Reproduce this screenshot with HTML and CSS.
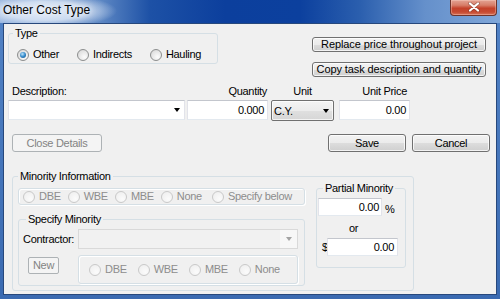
FILE: index.html
```html
<!DOCTYPE html>
<html lang="en">
<head>
  <meta charset="UTF-8">
  <title>Other Cost Type</title>
  <link rel="stylesheet" href="styles.css">
</head>
<body>
  <div class="window">
    <div class="titlebar">
      <span class="title">Other Cost Type</span>
      <button class="close-btn" aria-label="Close">
        <svg width="12" height="10" viewBox="0 0 12 10">
          <path d="M2 1.5 L10 8.5 M10 1.5 L2 8.5" stroke="#5a2a22" stroke-width="3.6" stroke-opacity="0.45" stroke-linecap="round"/>
          <path d="M2 1.5 L10 8.5 M10 1.5 L2 8.5" stroke="#fff" stroke-width="2.2" stroke-linecap="round"/>
        </svg>
      </button>
    </div>

    <div class="client">
      <!-- тип и кнопки справа -->
      <div class="row-top">
        <fieldset class="group type-group">
          <legend>Type</legend>
          <div class="radio-row type-radios">
            <span class="radio checked"><span class="dot"></span>Other</span>
            <span class="radio"><span class="dot"></span>Indirects</span>
            <span class="radio"><span class="dot"></span>Hauling</span>
          </div>
        </fieldset>
        <div class="side-buttons">
          <button class="btn wide">Replace price throughout project</button>
          <button class="btn wide">Copy task description and quantity</button>
        </div>
      </div>

      <!-- описание, количество, единица, цена -->
      <div class="row-fields">
        <div class="col col-desc">
          <span class="lbl">Description:</span>
          <div class="field combo-edit"><span class="val"></span><span class="arrow"></span></div>
        </div>
        <div class="col col-qty">
          <span class="lbl right">Quantity</span>
          <div class="field num">0.000</div>
        </div>
        <div class="col col-unit">
          <span class="lbl center">Unit</span>
          <div class="combo-list"><span class="val">C.Y.</span><span class="arrow"></span></div>
        </div>
        <div class="col col-price">
          <span class="lbl right">Unit Price</span>
          <div class="field num">0.00</div>
        </div>
      </div>

      <div class="row-actions">
        <button class="btn act disabled close-details">Close Details</button>
        <button class="btn act save">Save</button>
        <button class="btn act cancel">Cancel</button>
      </div>

      <!-- меньшинства -->
      <fieldset class="group minority">
        <legend>Minority Information</legend>
        <div class="minority-body">
          <div class="minority-left">
            <div class="panel radio-row top-radios">
              <span class="radio disabled"><span class="dot"></span>DBE</span>
              <span class="radio disabled"><span class="dot"></span>WBE</span>
              <span class="radio disabled"><span class="dot"></span>MBE</span>
              <span class="radio disabled"><span class="dot"></span>None</span>
              <span class="radio disabled wide-gap"><span class="dot"></span>Specify below</span>
            </div>
            <fieldset class="group specify">
              <legend>Specify Minority</legend>
              <div class="contractor-row">
                <span class="cell">Contractor:</span>
                <div class="combo-disabled"><span class="val"></span><span class="arrow"></span></div>
              </div>
              <div class="new-row">
                <span class="cell"><button class="btn disabled new-btn">New</button></span>
                <div class="panel radio-row bottom-radios">
                  <span class="radio disabled"><span class="dot"></span>DBE</span>
                  <span class="radio disabled"><span class="dot"></span>WBE</span>
                  <span class="radio disabled"><span class="dot"></span>MBE</span>
                  <span class="radio disabled"><span class="dot"></span>None</span>
                </div>
              </div>
            </fieldset>
          </div>
          <fieldset class="group partial">
            <legend>Partial Minority</legend>
            <div class="pct-row">
              <div class="field num small">0.00</div>
              <span class="unit-sign">%</span>
            </div>
            <div class="or">or</div>
            <div class="usd-row">
              <span class="dollar">$</span>
              <div class="field num usd">0.00</div>
            </div>
          </fieldset>
        </div>
      </fieldset>
    </div>
  </div>
</body>
</html>
```

FILE: styles.css
```css
body {
  margin: 0;
  background: #fff;
  font-family: "Liberation Sans", Arial, sans-serif;
  font-size: 11px;
  letter-spacing: -0.3px;
  color: #000;
}
/* Окно */
.window {
  width: 500px;
  height: 299px;
  background: linear-gradient(#5283c6, #3a6ab1);
  display: flex;
  flex-direction: column;
  overflow: hidden;
}
.titlebar {
  height: 23px;
  flex: none;
  display: flex;
  align-items: flex-start;
  background:
    radial-gradient(ellipse 72px 17px at 45px 11px, rgba(226,235,248,1) 0%, rgba(220,231,246,0.85) 55%, rgba(220,231,246,0) 100%),
    linear-gradient(90deg, #8eaedb 0, #5e88c4 20%, #1d51a6 30%, #0c3f9d 45%, #0c409e 60%, #2b5fae 72%, #6590cb 85%, #80a7d9 100%);
}
.title {
  font-size: 12px;
  letter-spacing: 0;
  line-height: 20px;
  padding-left: 3px;
  text-shadow: 0 0 6px rgba(255,255,255,0.9), 0 0 10px rgba(255,255,255,0.6);
}
.close-btn {
  margin-left: auto;
  margin-right: 3px;
  width: 47px;
  height: 16px;
  padding: 0 0 2px 0;
  border: 1px solid #6e342b;
  border-top: none;
  border-radius: 0 0 4px 4px;
  background: linear-gradient(#e3a394 0, #d77d68 35%, #c4412a 55%, #c64a31 80%, #d7735a 100%);
  box-shadow: inset 0 0 0 1px rgba(255,220,210,0.35);
  display: flex;
  align-items: center;
  justify-content: center;
}
.client {
  margin: 0 3px;
  height: 272px;
  box-sizing: border-box;
  border: 1px solid #27487c;
  background: #f0f0f0;
  padding-top: 3px;
}
/* Группы */
.group {
  margin: 0;
  min-inline-size: 0;
  border: 1px solid #d5dfe5;
  border-radius: 3px;
  padding: 0;
}
.group legend {
  padding: 0 2px;
  line-height: 13px;
}
.panel {
  border: 1px solid #d5dfe5;
  border-radius: 3px;
  box-shadow: inset 1px 1px 0 #fff, 1px 1px 0 #fff;
  box-sizing: border-box;
}
/* Радиокнопки */
.radio-row {
  display: flex;
  align-items: center;
}
.radio {
  display: flex;
  align-items: center;
  gap: 4px;
  line-height: 13px;
}
.dot {
  width: 12px;
  height: 12px;
  box-sizing: border-box;
  border: 1px solid #8c8e8e;
  border-radius: 50%;
  background: radial-gradient(circle at 65% 70%, #fcfcfc 0, #e2e2e2 65%, #cdcdcd 100%);
  display: flex;
  align-items: center;
  justify-content: center;
}
.radio.checked .dot::after {
  content: "";
  width: 6px;
  height: 6px;
  border-radius: 50%;
  background: radial-gradient(circle at 40% 35%, #bde4fa 0, #3289cb 50%, #1a4b78 100%);
}
.radio.disabled {
  color: #8d8d8d;
}
.radio.disabled .dot {
  border-color: #c9c9c9;
  background: radial-gradient(circle at 65% 70%, #fbfbfb 0, #f1f1f1 70%, #e8e8e8 100%);
}
/* Кнопки */
.btn {
  font: inherit;
  letter-spacing: inherit;
  color: #000;
  padding: 0;
  box-sizing: border-box;
  border: 1px solid #707070;
  border-radius: 3px;
  background: linear-gradient(#f2f2f2 0, #ebebeb 50%, #dddddd 50%, #cfcfcf 100%);
  box-shadow: inset 0 0 0 1px rgba(255,255,255,0.75);
  overflow: hidden;
}
.btn.disabled {
  border-color: #adb2b5;
  background: #f4f4f4;
  color: #838383;
  box-shadow: none;
}
/* Верхний ряд */
.row-top {
  display: flex;
  align-items: flex-start;
  padding-left: 4px;
  height: 50px;
}
.type-group {
  width: 210px;
  height: 37px;
  box-sizing: border-box;
  padding-left: 4px;
}
.type-radios {
  margin: 8px 0 0 4px;
  gap: 18px;
}
.side-buttons {
  margin: 10px 10px 0 auto;
  display: flex;
  flex-direction: column;
  gap: 10px;
}
.btn.wide {
  width: 174px;
  height: 15px;
  line-height: 13px;
  letter-spacing: -0.1px;
}
/* Поля */
.row-fields {
  display: flex;
  padding-left: 4px;
  margin-top: 8px;
}
.col {
  display: flex;
  flex-direction: column;
}
.lbl {
  line-height: 13px;
  margin-bottom: 2px;
}
.lbl.right { text-align: right; padding-right: 1px; }
.lbl.center { text-align: center; }
.col-desc { width: 177px; }
.col-desc .lbl { padding-left: 4px; }
.col-qty { width: 81px; margin-left: 2px; }
.col-unit { width: 63px; margin-left: 3px; }
.col-price { width: 71px; margin-left: 5px; }
.col-price .lbl { padding-right: 3px; }
.field {
  height: 20px;
  box-sizing: border-box;
  background: #fff;
  border: 1px solid;
  border-color: #c3c6cd #e2e3ea #e3e9ef #e2e3ea;
  line-height: 18px;
}
.field.num {
  text-align: right;
  padding-right: 3px;
}
.arrow {
  width: 0;
  height: 0;
  border-left: 3px solid transparent;
  border-right: 3px solid transparent;
  border-top: 4px solid #000;
}
.combo-edit {
  display: flex;
  align-items: center;
  justify-content: flex-end;
  padding-right: 4px;
}
.combo-list {
  height: 21px;
  box-sizing: border-box;
  border: 1px solid #707070;
  border-radius: 2px;
  background: linear-gradient(#f4f4f4 0, #ececec 50%, #e0e0e0 50%, #d6d6d6 100%);
  box-shadow: inset 0 0 0 1px rgba(255,255,255,0.7);
  display: flex;
  align-items: center;
  justify-content: space-between;
  padding: 0 4px 0 2px;
}
.combo-list .arrow {
  border-left-width: 3.5px;
  border-right-width: 3.5px;
}
/* Ряд кнопок */
.row-actions {
  display: flex;
  margin-top: 13px;
  padding: 0 6px 0 8px;
}
.btn.act {
  height: 18px;
  line-height: 16px;
  width: 78px;
}
.btn.close-details { width: 90px; }
.btn.save { margin-left: auto; }
.btn.cancel { margin-left: 6px; }
/* Меньшинства */
.minority {
  margin: 18px 0 0 8px;
  width: 402px;
  box-sizing: border-box;
  padding: 0 7px 4px 5px;
}
.minority-body {
  display: flex;
  align-items: flex-start;
}
.minority-left {
  width: 287px;
  margin-top: 5px;
}
.top-radios {
  height: 17px;
  padding-left: 4px;
  gap: 7px;
}
.top-radios .wide-gap { margin-left: 3px; }
.specify {
  margin-top: 8px;
  padding: 3px 6px 1px 4px;
}
.specify legend { margin-left: 3px; }
.contractor-row,
.new-row {
  display: flex;
  align-items: flex-start;
}
.cell {
  width: 55px;
  flex: none;
  line-height: 20px;
}
.combo-disabled {
  flex: 1;
  height: 20px;
  box-sizing: border-box;
  border: 1px solid #d9d9d9;
  background: linear-gradient(90deg, #f1f1f1 0, #f1f1f1 92%, #f7f7f7 92%);
  display: flex;
  align-items: center;
  justify-content: flex-end;
  padding-right: 5px;
}
.combo-disabled .arrow { border-top-color: #a3a3a3; }
.new-row { margin-top: 6px; }
.btn.new-btn {
  margin-left: 5px;
  width: 31px;
  height: 17px;
  line-height: 15px;
  border-radius: 2px;
  margin-top: 1px;
}
.bottom-radios {
  flex: 1;
  height: 29px;
  padding-left: 10px;
  gap: 11px;
}
.partial {
  margin-left: 11px;
  margin-top: -1px;
  width: 90px;
  box-sizing: border-box;
  padding: 3px 0 11px 1px;
}
.partial legend { margin-left: 5px; }
.pct-row,
.usd-row {
  display: flex;
  align-items: center;
}
.field.small {
  width: 64px;
  height: 18px;
  line-height: 16px;
  padding-right: 2px;
}
.unit-sign {
  margin-left: 3px;
  margin-top: 3px;
}
.or {
  margin-top: 6px;
  line-height: 13px;
  padding-left: 31px;
}
.usd-row { margin-top: 3px; }
.dollar {
  width: 5px;
  margin-left: 4px;
}
.field.usd {
  width: 71px;
  height: 18px;
  line-height: 16px;
}
```
